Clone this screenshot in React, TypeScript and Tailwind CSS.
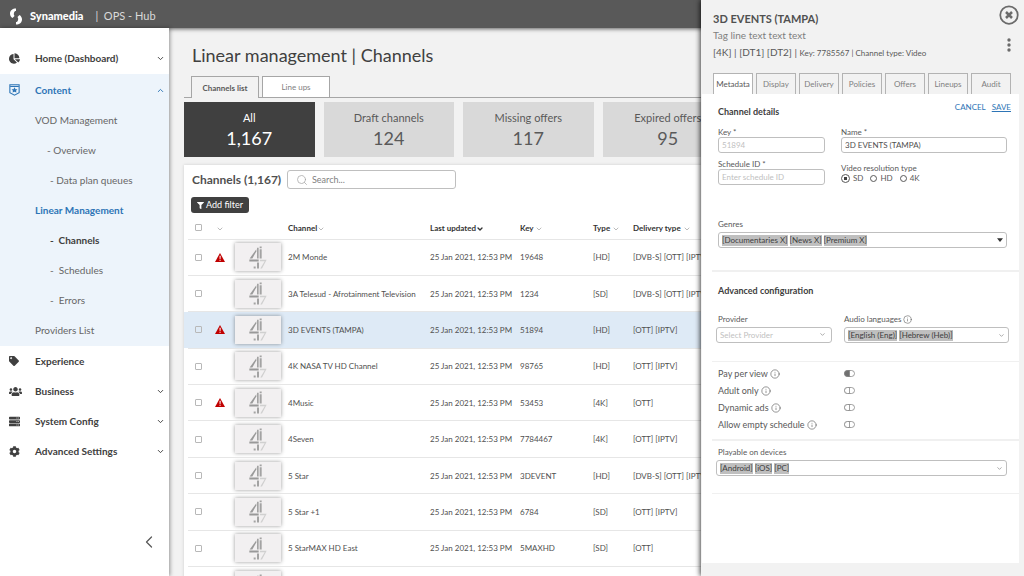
import type { ReactNode } from "react";
import { FaChartPie, FaTag, FaUsers, FaServer, FaCog, FaFilter } from "react-icons/fa";
import { ChevronDown, ChevronUp, ChevronLeft, Search, Info } from "lucide-react";

type Channel = { name: string; key: string; type: string; delivery: string; alert?: boolean; selected?: boolean };

const channels: Channel[] = [
  { name: "2M Monde", key: "19648", type: "[HD]", delivery: "[DVB-S] [OTT] [IPTV]", alert: true },
  { name: "3A Telesud - Afrotainment Television", key: "1234", type: "[SD]", delivery: "[DVB-S] [OTT] [IPTV]" },
  { name: "3D EVENTS (TAMPA)", key: "51894", type: "[HD]", delivery: "[OTT] [IPTV]", alert: true, selected: true },
  { name: "4K NASA TV HD Channel", key: "98765", type: "[HD]", delivery: "[OTT] [IPTV]" },
  { name: "4Music", key: "53453", type: "[4K]", delivery: "[OTT]", alert: true },
  { name: "4Seven", key: "7784467", type: "[4K]", delivery: "[OTT] [IPTV]" },
  { name: "5 Star", key: "3DEVENT", type: "[HD]", delivery: "[DVB-S] [OTT] [IPTV]" },
  { name: "5 Star +1", key: "6784", type: "[SD]", delivery: "[OTT] [IPTV]" },
  { name: "5 StarMAX HD East", key: "5MAXHD", type: "[SD]", delivery: "[OTT]" },
];

function BrandMark() {
  return (
    <svg viewBox="0 0 24 34" className="h-[17px] w-3" aria-hidden="true">
      <path d="M12 1C5 1 0 5 0 11c0 4 2 7 5 9l4-4c-1-2-2-3-1-6 .5-3 2-4 4-4z" fill="#fff" />
      <path d="M12 33c7 0 12-4 12-10 0-4-2-7-5-9l-4 4c1 2 2 3 1 6-.5 3-2 4-4 4z" fill="#fff" />
    </svg>
  );
}

function ShieldIcon() {
  return (
    <svg viewBox="0 0 20 22" className="h-3 w-[11px]" fill="none" stroke="#2e75b6" aria-hidden="true">
      <path d="M1.500 1.500h17v14.500l-8.500 4.500-8.500-4.500z" strokeWidth="2" />
      <path d="M2 4.500h16" strokeWidth="2" />
      <path d="M10 6l1.800 3.400 3.600.3-2.600 2.500.8 3.600-3.600-1.800-3.600 1.800.8-3.600-2.600-2.500 3.600-.3z" fill="#2e75b6" stroke="none" />
    </svg>
  );
}

function ChannelLogo() {
  return (
    <svg viewBox="0 0 54 68" className="h-[23px] w-[18px]" aria-hidden="true">
      <path d="M22 9v7L10 37H2z" fill="#9a9a9a" />
      <path d="M24 5h5v32h-5zM32 9h6v28h-6zM32 1h6v5h-6z" fill="#a3a3a3" />
      <path d="M1 40h28v6H1z" fill="#999" />
      <path d="M24 49h6v18h-6zM14 61h6v6h-6z" fill="#a3a3a3" />
      <path d="M33 41h20L39 67h-5l13-22H33z" fill="#d0d0d0" />
    </svg>
  );
}

function AlertIcon() {
  return (
    <svg viewBox="0 0 20 18" className="mx-auto h-[9px] w-[10px]" role="img" aria-label="Alert">
      <path d="M10 0l10 18H0z" fill="#c00000" />
      <path d="M9 5.500h2.400L11 12H9.300z M9 13.500h2.300v2H9z" fill="#fff" />
    </svg>
  );
}

function NavRow({ icon, label, chevron, accent }: { icon: ReactNode; label: string; chevron?: "up" | "down"; accent?: boolean }) {
  return (
    <a
      href="#"
      className={
        accent
          ? "flex h-[30px] items-center pr-1 text-[10px] font-bold text-[#2e75b6]"
          : "flex h-[30px] items-center pr-1 text-[10px] font-bold text-[#404040]"
      }
    >
      <span className="flex w-[35px] items-center pl-[9px]">{icon}</span>
      <span className="flex-1 whitespace-nowrap">{label}</span>
      {chevron === "down" && <ChevronDown size={9} strokeWidth={2.500} />}
      {chevron === "up" && <ChevronUp size={9} strokeWidth={2.500} />}
    </a>
  );
}

const subItems = [
  { label: "VOD Management", className: "flex h-[30px] items-center pl-[35px]" },
  { label: "- Overview", className: "flex h-[30px] items-center pl-[47px]" },
  { label: "- Data plan queues", className: "flex h-[30px] items-center pl-[50px]" },
  { label: "Linear Management", className: "flex h-[30px] items-center pl-[35px] font-bold text-[#2e75b6]" },
  { label: "-\u00a0 Channels", className: "flex h-[30px] items-center pl-[50px] font-bold text-[#404040]" },
  { label: "-\u00a0 Schedules", className: "flex h-[30px] items-center pl-[50px]" },
  { label: "-\u00a0 Errors", className: "flex h-[30px] items-center pl-[50px]" },
  { label: "Providers List", className: "flex h-[30px] items-center pl-[35px]" },
];

function Sidebar() {
  return (
    <nav className="z-10 flex w-[169px] shrink-0 flex-col bg-white pt-[15px] shadow-[1px_0_4px_rgba(0,0,0,0.4)]">
      <NavRow icon={<FaChartPie size={11} />} label="Home (Dashboard)" chevron="down" />
      <div className="mt-px bg-[#edf4fb] py-px text-[10px] text-[#666]">
        <NavRow icon={<ShieldIcon />} label="Content" chevron="up" accent />
        {subItems.map((item) => (
          <a key={item.label} href="#" className={item.className}>
            {item.label}
          </a>
        ))}
      </div>
      <NavRow icon={<FaTag size={10} />} label="Experience" />
      <NavRow icon={<FaUsers size={13} />} label="Business" chevron="down" />
      <NavRow icon={<FaServer size={11} />} label="System Config" chevron="down" />
      <NavRow icon={<FaCog size={11} />} label="Advanced Settings" chevron="down" />
      <button aria-label="Collapse menu" className="mt-auto mr-[10px] mb-6 self-end text-[#595959]">
        <ChevronLeft size={20} strokeWidth={1.500} />
      </button>
    </nav>
  );
}

const stats = [
  { label: "All", value: "1,167", className: "bg-[#404040] text-white" },
  { label: "Draft channels", value: "124", className: "bg-[#d9d9d9] text-[#595959]" },
  { label: "Missing offers", value: "117", className: "bg-[#d9d9d9] text-[#595959]" },
  { label: "Expired offers", value: "95", className: "bg-[#d9d9d9] text-[#595959]" },
];

function SortMark({ strong }: { strong?: boolean }) {
  return (
    <ChevronDown
      size={8}
      strokeWidth={strong ? 4 : 2}
      className={strong ? "inline text-[#333]" : "inline text-[#999]"}
    />
  );
}

function RowCheck({ label }: { label: string }) {
  return (
    <input
      type="checkbox"
      aria-label={label}
      className="mx-auto block size-[7px] appearance-none rounded-[1px] border border-[#b8b8b8] checked:bg-[#595959]"
    />
  );
}

function Thumb() {
  return (
    <div className="ml-1 flex h-7 w-[46px] items-center justify-center bg-[#f2f0f1] shadow-[0_0_4px_rgba(0,0,0,0.4)]">
      <ChannelLogo />
    </div>
  );
}

function ChannelTable() {
  return (
    <div className="pl-1">
      <table className="h-[386px] w-full table-fixed border-collapse text-left text-[8px] whitespace-nowrap text-[#505050]">
        <colgroup>
          <col className="w-[21px]" />
          <col className="w-[22px]" />
          <col className="w-[57px]" />
          <col className="w-[142px]" />
          <col className="w-[90px]" />
          <col className="w-[73px]" />
          <col className="w-[40px]" />
          <col />
        </colgroup>
        <thead>
          <tr className="h-[22px] border-b border-[#e6e6e6] text-[#333]">
            <th><RowCheck label="Select all channels" /></th>
            <th className="text-center"><SortMark /></th>
            <th />
            <th>Channel<SortMark /></th>
            <th>Last updated<SortMark strong /></th>
            <th>Key <SortMark /></th>
            <th>Type <SortMark /></th>
            <th>Delivery type <SortMark /></th>
          </tr>
        </thead>
        <tbody>
          {channels.map((c) => (
            <tr
              key={c.key}
              className={
                c.selected
                  ? "h-[36px] border-b border-[#e6e6e6] bg-[#deeaf6] [&>td:first-child]:shadow-[-4px_0_0_#deeaf6]"
                  : "h-[36px] border-b border-[#e6e6e6]"
              }
            >
              <td><RowCheck label={"Select " + c.name} /></td>
              <td>{c.alert && <AlertIcon />}</td>
              <td><Thumb /></td>
              <td>{c.name}</td>
              <td>25 Jan 2021, 12:53 PM</td>
              <td>{c.key}</td>
              <td>{c.type}</td>
              <td>{c.delivery}</td>
            </tr>
          ))}
          <tr className="h-[36px]">
            <td />
            <td />
            <td><Thumb /></td>
            <td colSpan={5} />
          </tr>
        </tbody>
      </table>
    </div>
  );
}

function Main() {
  return (
    <main className="min-w-0 flex-1 overflow-hidden pt-[14px] pl-[15px] text-[#404040]">
      <h1 className="pl-2 text-[18px] leading-[26px]">Linear management | Channels</h1>
      <div className="mt-2 flex h-[22px] items-stretch border-b border-[#a6a6a6] pl-[7px] text-[8px]">
        <button className="-mb-px w-[68px] border border-b-0 border-[#a6a6a6] bg-[#f2f2f2] font-bold text-[#595959]">
          Channels list
        </button>
        <button className="ml-[3px] w-[68px] border border-b-0 border-[#a6a6a6] bg-white text-[#7f7f7f]">Line ups</button>
      </div>
      <div className="mt-1 grid grid-cols-6 gap-[9px] pr-3">
        {stats.map((s) => (
          <button key={s.label} className={s.className}>
            <span className="block pt-2 text-[11px] leading-4 whitespace-nowrap">{s.label}</span>
            <span className="block pb-[7px] text-[18px] leading-6">{s.value}</span>
          </button>
        ))}
      </div>
      <section className="mt-2 bg-white shadow-[0_0_3px_rgba(0,0,0,0.15)]">
        <div className="flex items-center pt-[5px] pl-2">
          <h2 className="w-[95px] text-[12px] font-bold whitespace-nowrap text-[#505050]">Channels (1,167)</h2>
          <label className="flex h-[19px] w-[169px] items-center gap-1 rounded-[3px] border border-[#bfbfbf] pl-2">
            <Search size={12} strokeWidth={1.500} className="shrink-0 text-[#a6a6a6]" />
            <input
              aria-label="Search"
              placeholder="Search..."
              className="w-full min-w-0 bg-transparent text-[9px] outline-none placeholder:text-[#7f7f7f]"
            />
          </label>
        </div>
        <button className="mt-2 ml-[7px] flex h-4 w-[58px] items-center justify-center gap-0.5 rounded-[3px] bg-[#404040] text-[9px] whitespace-nowrap text-white">
          <FaFilter size={7} /> Add filter
        </button>
        <div className="pt-1">
          <ChannelTable />
        </div>
      </section>
    </main>
  );
}

const panelTabs = ["Metadata", "Display", "Delivery", "Policies", "Offers", "Lineups", "Audit"];

const fieldClass =
  "h-4 w-full rounded-[3px] border border-[#bfbfbf] bg-white px-[3px] text-[8px] text-[#505050] outline-none placeholder:text-[#bfbfbf]";

function TagField({ label, tags, solid }: { label: string; tags: string[]; solid?: boolean }) {
  return (
    <button
      aria-label={label}
      className="flex h-4 w-full items-center gap-0.5 rounded-[3px] border border-[#bfbfbf] bg-white px-[3px] text-[8px] leading-[11px] text-[#404040]"
    >
      {tags.map((t) => (
        <span key={t} className="bg-[#bfbfbf]">{t}</span>
      ))}
      <span className="ml-auto">
        {solid ? (
          <svg viewBox="0 0 8 5" className="h-1 w-[6px]" aria-hidden="true"><path d="M0 0h8L4 5z" fill="#333" /></svg>
        ) : (
          <ChevronDown size={7} strokeWidth={2.500} className="text-[#8c8c8c]" />
        )}
      </span>
    </button>
  );
}

function Toggle({ label, on }: { label: string; on?: boolean }) {
  return (
    <div className="flex h-[17px] items-center">
      <label htmlFor={label} className="flex w-[126px] items-center gap-0.5 text-[9px] whitespace-nowrap">
        {label} <Info size={10} strokeWidth={1.500} />
      </label>
      <span className="relative flex">
        <input id={label} type="checkbox" role="switch" defaultChecked={on} className="peer absolute inset-0 opacity-0" />
        <svg viewBox="0 0 22 14" className="h-[7px] w-[11px] text-white peer-checked:text-[#707070]" aria-hidden="true">
          <rect x="1" y="1" width="20" height="12" rx="6" fill="#fff" stroke="#808080" strokeWidth="1.500" />
          <path d="M7 1a6 6 0 0 0 0 12h4V1z" fill="currentColor" stroke="#808080" strokeWidth="1.500" />
        </svg>
      </span>
    </div>
  );
}

function DetailPanel() {
  return (
    <aside className="absolute inset-y-0 right-0 z-20 flex w-[323px] flex-col bg-[#f2f2f2] pr-[5px] pl-px text-[#595959] shadow-[-1px_0_5px_rgba(0,0,0,0.75)]">
      <header className="flex justify-between pt-[5px] pl-[11px]">
        <div className="pt-[6px] whitespace-nowrap">
          <h2 className="text-[11px] leading-4 font-bold text-[#505050]">3D EVENTS (TAMPA)</h2>
          <p className="text-[10px] leading-4 text-[#7f7f7f]">Tag line text text text</p>
          <p className="text-[10px] leading-[18px]">
            [4K] | [DT1] [DT2] | <span className="text-[8px]">Key: 7785567 | Channel type: Video</span>
          </p>
        </div>
        <div className="flex w-5 flex-col items-center gap-[13px]">
          <button aria-label="Close">
            <svg viewBox="0 0 40 40" className="size-5" fill="none" stroke="#6b6b6b" aria-hidden="true">
              <circle cx="20" cy="20" r="17.500" strokeWidth="3.500" />
              <path d="M14 14l12 12M26 14L14 26" strokeWidth="5" />
            </svg>
          </button>
          <button aria-label="More actions">
            <svg viewBox="0 0 4 14" className="h-[14px] w-1" fill="#6b6b6b" aria-hidden="true">
              <circle cx="2" cy="2" r="1.700" />
              <circle cx="2" cy="7" r="1.700" />
              <circle cx="2" cy="12" r="1.700" />
            </svg>
          </button>
        </div>
      </header>
      <div className="mt-[11px] grid h-[21px] grid-cols-7 gap-[3px] pr-2 pl-[11px] text-[8px] text-[#7f7f7f]">
        {panelTabs.map((t, i) => (
          <button
            key={t}
            className={i === 0 ? "border border-b-0 border-[#b3b3b3] bg-white text-[#595959]" : "border border-b-0 border-[#b3b3b3]"}
          >
            {t}
          </button>
        ))}
      </div>
      <div className="flex-1 bg-white text-[8px] leading-[10px]">
        <section className="pt-2 pr-3 pl-4">
          <div className="flex items-start justify-between">
            <h3 className="pt-1 text-[9px] leading-3 font-bold text-[#404040]">Channel details</h3>
            <div className="-mr-1 flex gap-[6px] leading-[10px]">
              <button className="text-[#2e75b6]">CANCEL</button>
              <button className="text-[#2e75b6] underline">SAVE</button>
            </div>
          </div>
          <div className="grid grid-cols-[107px_1fr] gap-x-4 pt-[9px]">
            <label>Key *<input placeholder="51894" className={fieldClass} /></label>
            <label>Name *<input defaultValue="3D EVENTS (TAMPA)" className={fieldClass} /></label>
            <label className="mt-[6px]">Schedule ID *<input placeholder="Enter schedule ID" className={fieldClass} /></label>
            <fieldset className="mt-[10px]">
              <legend>Video resolution type</legend>
              <div className="flex gap-[7px]">
                {["SD", "HD", "4K"].map((r) => (
                  <label key={r} className="flex items-center gap-[3px]">
                    <input
                      type="radio"
                      name="resolution"
                      defaultChecked={r === "SD"}
                      className="size-[7px] appearance-none rounded-full border border-[#595959] checked:size-[9px] checked:bg-[radial-gradient(circle,#404040_30%,#fff_40%)]"
                    />
                    {r}
                  </label>
                ))}
              </div>
            </fieldset>
          </div>
          <p className="mt-[34px] mb-[3px]">Genres</p>
          <TagField label="Genres" tags={["[Documentaries X]", "[News X]", "[Premium X]"]} solid />
        </section>
        <section className="mt-[22px] ml-[10px] border-t-2 border-[#f0f0f0] pt-[13px] pr-[10px] pl-[6px]">
          <h3 className="text-[9px] leading-3 font-bold text-[#404040]">Advanced configuration</h3>
          <div className="-ml-0.5 grid grid-cols-[116px_1fr] gap-x-3 pt-[17px] pb-[18px]">
            <div>
              <label htmlFor="provider" className="mb-[3px] block pl-0.5">Provider</label>
              <div className="relative">
                <select id="provider" className="h-4 w-full appearance-none rounded-[3px] border border-[#bfbfbf] bg-white px-[3px] text-[8px] text-[#bfbfbf]">
                  <option>Select Provider</option>
                </select>
                <ChevronDown size={7} strokeWidth={2.500} className="pointer-events-none absolute top-1 right-[6px] text-[#8c8c8c]" />
              </div>
            </div>
            <div>
              <p className="mb-[3px] flex items-center gap-0.5">Audio languages <Info size={9} strokeWidth={1.500} /></p>
              <TagField label="Audio languages" tags={["[English (Eng)]", "[Hebrew (Heb)]"]} />
            </div>
          </div>
        </section>
        <section className="ml-[10px] border-t border-[#f0f0f0] pt-[3px] pb-[6px] pl-[6px]">
          <Toggle label="Pay per view" on />
          <Toggle label="Adult only" />
          <Toggle label="Dynamic ads" />
          <Toggle label="Allow empty schedule" />
        </section>
        <section className="ml-[10px] border-y border-t-2 border-[#f0f0f0] pt-[6px] pr-3 pb-[17px] pl-1">
          <p className="mb-[3px] pl-0.5">Playable on devices</p>
          <TagField label="Playable on devices" tags={["[Android]", "[iOS]", "[PC]"]} />
        </section>
      </div>
      <div className="h-[13px]" />
    </aside>
  );
}

export default function App() {
  return (
    <div className="relative flex h-screen flex-col overflow-hidden bg-[#f2f2f2] font-['Lato','Open_Sans',sans-serif]">
      <header className="z-10 flex h-7 shrink-0 items-center bg-[#595959] pt-1 pl-[10px] text-white shadow-[0_1px_4px_rgba(0,0,0,0.6)]">
        <BrandMark />
        <span className="ml-2 text-[11px] font-black">Synamedia</span>
        <span className="ml-3 text-[11px] text-[#d9d9d9]">|&nbsp; OPS - Hub</span>
      </header>
      <div className="flex min-h-0 flex-1">
        <Sidebar />
        <Main />
      </div>
      <DetailPanel />
    </div>
  );
}
